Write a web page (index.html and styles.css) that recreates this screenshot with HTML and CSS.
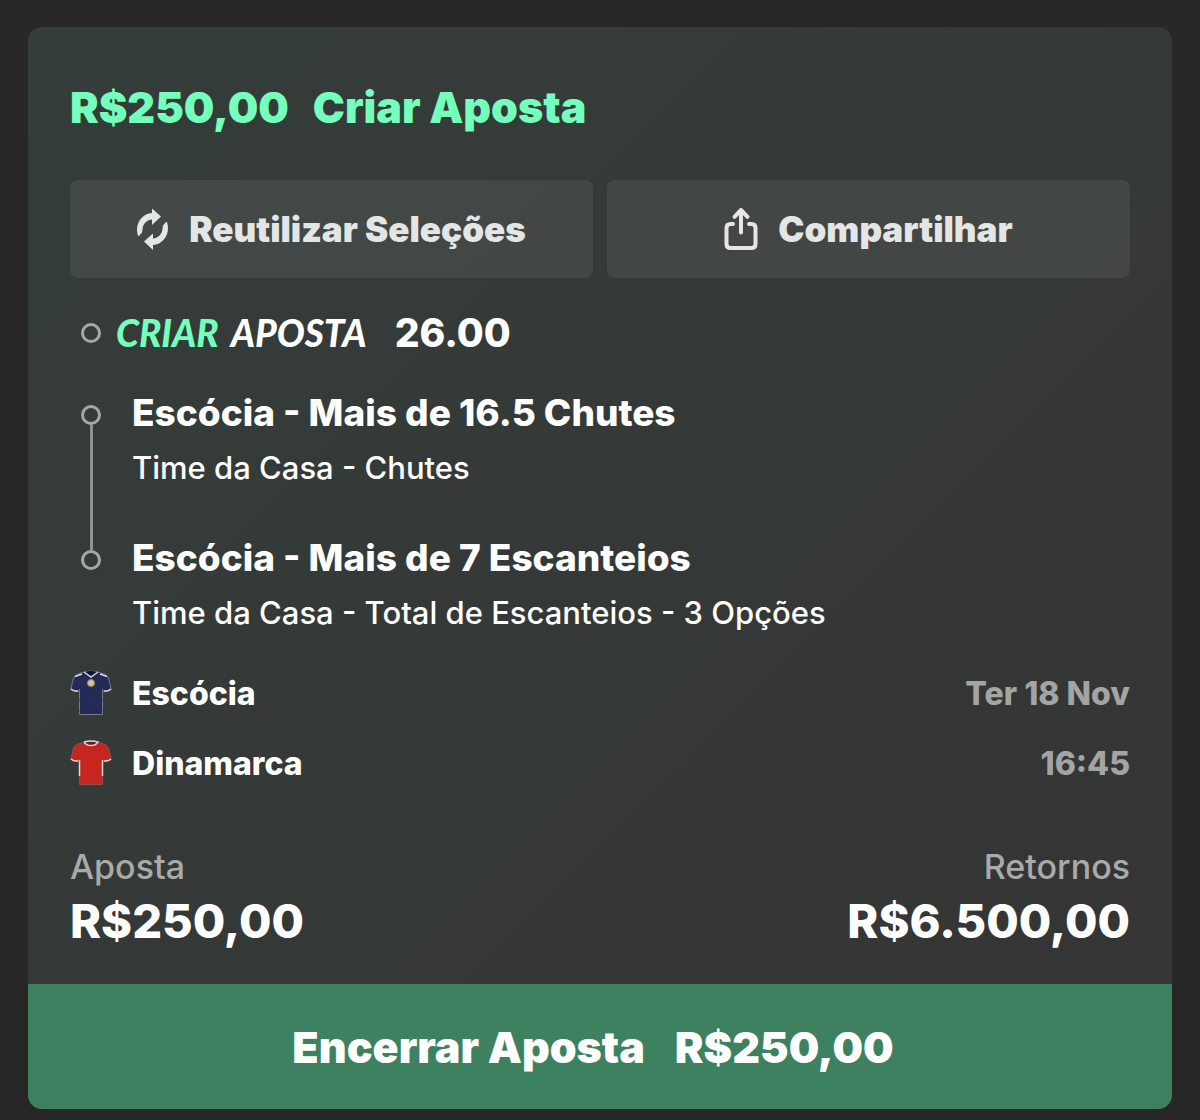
FILE: index.html
```html
<!DOCTYPE html>
<html lang="pt-BR">
<head>
    <meta charset="UTF-8">
    <meta name="viewport" content="width=device-width, initial-scale=1.0">
    <title>Criar Aposta</title>
    <link rel="stylesheet" href="styles.css">
</head>
<body>
    <main class="card">
        <div class="card-body">
            <h1><span>R$250,00</span><span>Criar Aposta</span></h1>

            <div class="actions">
                <button class="btn" type="button">
                    <svg class="icon-reuse" viewBox="0 0 32 42" width="32" height="42" aria-hidden="true">
                        <path d="M15 .5 24 8.500 15 17V11.500C9.500 12 5.500 16.500 5.500 21.500L5 24.500 1.500 28.500C.5 26.500 0 24.500 0 21.500 0 13 6.500 5.500 15 5z"/>
                        <path d="M16 42 7 33.500 16 25.500V30.500C21.500 30 25.500 25.500 25.500 20.500L26 17.500 29.500 13.500C30.500 15.500 31 17.500 31 20.500 31 29 24.500 36.500 16 37z"/>
                    </svg>
                    Reutilizar Seleções
                </button>
                <button class="btn" type="button">
                    <svg class="icon-share" viewBox="0 0 34 44" width="34" height="44" aria-hidden="true">
                        <path d="M9 17H6.500Q2.500 17 2.500 21V37Q2.500 41 6.500 41H27.500Q31.500 41 31.500 37V21Q31.500 17 27.500 17H25"/>
                        <path d="M17 25.500V3M10.500 9.800 17 3 23.500 9.800"/>
                    </svg>
                    Compartilhar
                </button>
            </div>

            <div class="builder">
                <div class="marker"><span class="dot"></span></div>
                <div class="brand"><span>CRIAR</span><span>APOSTA</span></div>
                <div class="odds">26.00</div>
            </div>

            <div class="legs">
                <div class="leg">
                    <div class="marker"><span class="dot"></span><span class="line"></span></div>
                    <div class="selection">
                        <h2>Escócia - Mais de 16.5 Chutes</h2>
                        <p>Time da Casa - Chutes</p>
                    </div>
                </div>
                <div class="leg">
                    <div class="marker"><span class="dot"></span></div>
                    <div class="selection">
                        <h2>Escócia - Mais de 7 Escanteios</h2>
                        <p>Time da Casa - Total de Escanteios - 3 Opções</p>
                    </div>
                </div>
            </div>

            <div class="teams">
                <div class="team">
                    <svg viewBox="0 0 42 46" width="42" height="46" aria-hidden="true">
                        <path d="M14 2 7 4.500Q4.500 5.500 3.500 8L.800 19.500Q4 22 8.500 21.500L9.500 19V44.500H32.500V19L33.500 21.500Q38 22 41.200 19.500L38.500 8Q37.500 5.500 35 4.500L28 2Q21 0 14 2z" fill="#222a55" stroke="#77788c"/>
                        <path d="M10 20 32 42M10 30 23 43M14 12 32 30M32 20 10 42M32 30 19 43M28 12 10 30" stroke="#292c54" stroke-width="2" fill="none"/>
                        <path d="M15 2Q21 0 27 2L21 6z" fill="#11152b"/>
                        <path d="M14 2 21 7 28 2M5 6.500 12 4M37 6.500 30 4M1 19Q4 21.500 8 21M41 19Q38 21.500 34 21" stroke="#d5d5de" stroke-width="1.500" fill="none"/>
                        <circle cx="21" cy="13" r="3.500" fill="#d9c681" stroke="#8d8b82"/>
                    </svg>
                    <span>Escócia</span>
                    <time>Ter 18 Nov</time>
                </div>
                <div class="team">
                    <svg viewBox="0 0 42 46" width="42" height="46" aria-hidden="true">
                        <path d="M14 2 7 4.500Q4.500 5.500 3.500 8L.800 19.500Q4 22 8.500 21.500L9.500 19V44.500H32.500V19L33.500 21.500Q38 22 41.200 19.500L38.500 8Q37.500 5.500 35 4.500L28 2Q21 0 14 2z" fill="#c5261f" stroke="#8e5149"/>
                        <path d="M15 2Q21 0 27 2 25 5 21 5T15 2z" fill="#5b2420"/>
                        <path d="M14 2Q16 5.500 21 5.500T28 2Q21 0 14 2M1 19Q4 21.500 8 21M41 19Q38 21.500 34 21M9.500 20V36M32.500 20V36" stroke="#e2d6d2" stroke-width="1.500" fill="none"/>
                    </svg>
                    <span>Dinamarca</span>
                    <time>16:45</time>
                </div>
            </div>

            <dl class="totals">
                <div>
                    <dt>Aposta</dt>
                    <dd>R$250,00</dd>
                </div>
                <div class="returns">
                    <dt>Retornos</dt>
                    <dd>R$6.500,00</dd>
                </div>
            </dl>
        </div>

        <button class="cashout" type="button"><span>Encerrar Aposta</span><span>R$250,00</span></button>
    </main>
</body>
</html>
```

FILE: styles.css
```css
* {
    box-sizing: border-box;
}

body {
    margin: 0;
    padding: 27px 28px 11px;
    background: #272727;
    color: #fff;
    font-family: Inter, "Liberation Sans", sans-serif;
}

h1, h2, p, dl, dd {
    margin: 0;
}

button {
    border: none;
    font-family: inherit;
    cursor: pointer;
}

.card {
    border-radius: 14px;
    overflow: hidden;
    background: linear-gradient(135deg, #343d3a 0%, #343937 50%, #353535 85%);
}

.card-body {
    padding: 50px 42px 36px;
}

h1 {
    display: flex;
    gap: 24px;
    font-size: 43px;
    line-height: 60px;
    font-weight: 900;
    color: #74ffbc;
}

/* reuse / share */
.actions {
    display: grid;
    grid-template-columns: 1fr 1fr;
    gap: 14px;
    margin-top: 43px;
}

.btn {
    display: flex;
    align-items: center;
    justify-content: center;
    gap: 20px;
    height: 98px;
    padding: 0;
    border-radius: 8px;
    background: rgba(255, 255, 255, 0.07);
    color: #e4e6e5;
    font-size: 35px;
    font-weight: 900;
}

.icon-reuse {
    fill: #e4e6e5;
}

.icon-share {
    fill: none;
    stroke: #e4e6e5;
    stroke-width: 4;
    stroke-linecap: round;
    stroke-linejoin: round;
}

/* bet builder row */
.builder {
    display: flex;
    align-items: center;
    margin-top: 25px;
    line-height: 60px;
}

.marker {
    display: flex;
    flex-direction: column;
    align-items: center;
    flex: none;
    width: 42px;
}

.dot {
    width: 20px;
    height: 20px;
    border: 3px solid #a5a8a6;
    border-radius: 50%;
}

.line {
    flex: 1;
    width: 3px;
    margin-bottom: -20px;
    background: #8f9391;
}

.brand {
    display: flex;
    gap: 12px;
    margin-left: 4px;
    font-family: Lato, sans-serif;
    font-size: 37px;
    font-style: italic;
    font-weight: 900;
}

.brand span:first-child {
    color: #74ffbc;
}

.odds {
    margin-left: 28px;
    font-size: 39px;
    font-weight: 800;
}

/* selections */
.legs {
    margin-top: 22px;
}

.leg {
    display: flex;
    gap: 20px;
    line-height: 55px;
}

.leg .marker {
    padding-top: 20px;
}

.leg:first-child .selection {
    padding-bottom: 35px;
}

h2 {
    font-size: 37px;
    font-weight: 800;
}

.leg p {
    font-size: 31px;
    font-weight: 500;
}

/* teams and kick-off */
.teams {
    margin-top: 18px;
}

.team {
    display: flex;
    align-items: center;
    gap: 20px;
    height: 70px;
    font-size: 32px;
    font-weight: 800;
}

.team time {
    margin-left: auto;
    color: #a3a4a4;
}

.totals {
    display: flex;
    justify-content: space-between;
    margin-top: 42px;
    line-height: 54px;
}

.totals dt {
    color: #a9aaaa;
    font-size: 34px;
    font-weight: 500;
}

.totals dd {
    font-size: 47px;
    font-weight: 800;
}

.returns {
    text-align: right;
}

.cashout {
    display: flex;
    align-items: center;
    justify-content: center;
    gap: 30px;
    width: 100%;
    height: 125px;
    padding: 0 14px 0 0;
    background: #3e8161;
    color: #fff;
    font-size: 43px;
    font-weight: 900;
}
```
